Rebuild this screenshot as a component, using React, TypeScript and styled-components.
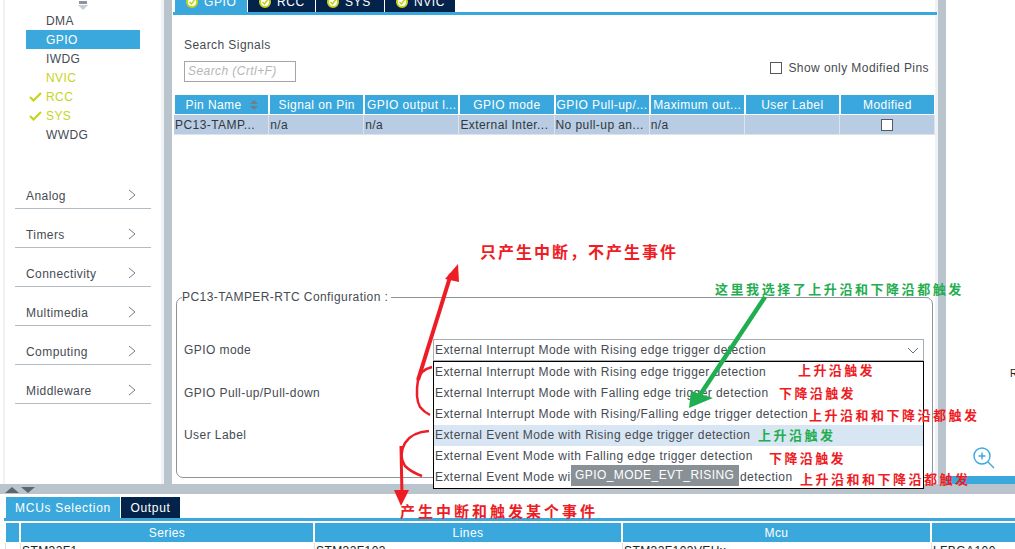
import styled, { createGlobalStyle } from "styled-components";

const Blue = "#3aa8dc";
const Navy = "#03234b";
const Steel = "#b9c4cc";
const Pale = "#f0f3f5";
const Ink = "#464b52";
const Lime = "#c6d41c";
const Red = "#ee1c25";
const Green = "#1fae50";

const GlobalStyle = createGlobalStyle`
    html, body {
        margin: 0;
        padding: 0;
        background: #fff;
    }
    * {
        box-sizing: border-box;
    }
`;

const peripherals = [
    { name: "DMA" },
    { name: "GPIO", selected: true },
    { name: "IWDG" },
    { name: "NVIC", active: true },
    { name: "RCC", active: true, checked: true },
    { name: "SYS", active: true, checked: true },
    { name: "WWDG" },
];

const categories = ["Analog", "Timers", "Connectivity", "Multimedia", "Computing", "Middleware"];

const tabs = [
    { name: "GPIO", width: 72, selected: true },
    { name: "RCC", width: 67 },
    { name: "SYS", width: 68 },
    { name: "NVIC", width: 70 },
];

const columns = [
    "Pin Name",
    "Signal on Pin",
    "GPIO output l...",
    "GPIO mode",
    "GPIO Pull-up/...",
    "Maximum out...",
    "User Label",
    "Modified",
];

const cells = ["PC13-TAMP...", "n/a", "n/a", "External Inter...", "No pull-up an...", "n/a", ""];

const options = [
    "External Interrupt Mode with Rising edge trigger detection",
    "External Interrupt Mode with Falling edge trigger detection",
    "External Interrupt Mode with Rising/Falling edge trigger detection",
    "External Event Mode with Rising edge trigger detection",
    "External Event Mode with Falling edge trigger detection",
    "External Event Mode with Rising/Falling edge trigger detection",
];

const notes = [
    { text: "只产生中断，不产生事件", x: 480, y: 243, size: 16, gap: 2, color: Red },
    { text: "这里我选择了上升沿和下降沿都触发", x: 715, y: 280, size: 13, gap: 2.55, color: Green },
    { text: "上升沿触发", x: 798, y: 361, size: 13, gap: 2.4, color: Red },
    { text: "下降沿触发", x: 779, y: 384, size: 13, gap: 2.4, color: Red },
    { text: "上升沿和和下降沿都触发", x: 809, y: 406, size: 13, gap: 2.5, color: Red },
    { text: "上升沿触发", x: 758, y: 426, size: 13, gap: 2.5, color: Green },
    { text: "下降沿触发", x: 769, y: 449, size: 13, gap: 2.4, color: Red },
    { text: "上升沿和和下降沿都触发", x: 800, y: 470, size: 13, gap: 2.5, color: Red },
    { text: "产生中断和触发某个事件", x: 400, y: 502, size: 15, gap: 3, color: Red },
];

function TabBadge() {
    return (
        <svg width="12" height="12" viewBox="0 0 12 12">
            <circle cx="6" cy="6" r="5" fill="#fff" stroke={Lime} strokeWidth="2" />
            <path d="M3.5 6 L5.5 8 L8.5 4" fill="none" stroke={Lime} strokeWidth="1.6" />
        </svg>
    );
}

function Check() {
    return (
        <svg width="13" height="10" viewBox="0 0 13 10">
            <path d="M1 5 L4.5 8.5 L12 1" fill="none" stroke={Lime} strokeWidth="2.2" />
        </svg>
    );
}

function Chevron() {
    return (
        <svg width="8" height="12" viewBox="0 0 8 12">
            <path d="M1 1 L7 6 L1 11" fill="none" stroke="#777d83" strokeWidth="1" />
        </svg>
    );
}

function Scribbles() {
    return (
        <svg width="1015" height="549" viewBox="0 0 1015 549">
            <path d="M418 380 L451 274" fill="none" stroke={Red} strokeWidth="4" />
            <path d="M458 264 L445 279 L459 282 Z" fill={Red} />
            <path d="M432 367 Q420 370 418 380 Q415 398 420 407 Q424 412 430 415" fill="none" stroke={Red} strokeWidth="2.5" />
            <path d="M765 297 L698 398" fill="none" stroke={Green} strokeWidth="4.5" />
            <path d="M689 408 L691 391 L713 398 Z" fill={Green} />
            <path d="M429 431 Q412 432 405 443 Q398 455 405 466 Q411 472 422 476" fill="none" stroke={Red} strokeWidth="2.5" />
            <path d="M401 446 L402 496" fill="none" stroke={Red} strokeWidth="3" />
            <path d="M401 506 L394 490 L409 490 Z" fill={Red} />
        </svg>
    );
}

export default function App() {
    return (
        <Page>
            <GlobalStyle />
            <TopArea>
                <Sidebar>
                    <ScrollHint>
                        <svg width="10" height="9" viewBox="0 0 10 9">
                            <rect x="1" y="0" width="8" height="3" fill="#8d9399" />
                            <path d="M0 4 H10 L5 9 Z" fill="#c6cbcf" />
                        </svg>
                    </ScrollHint>
                    {peripherals.map(item => (
                        <PeripheralRow key={item.name} $selected={item.selected} $active={item.active}>
                            <CheckSlot>{item.checked && <Check />}</CheckSlot>
                            {item.name}
                        </PeripheralRow>
                    ))}
                    <Categories>
                        {categories.map(name => (
                            <CategoryRow key={name}>
                                {name}
                                <Chevron />
                            </CategoryRow>
                        ))}
                    </Categories>
                </Sidebar>
                <VSplitter />
                <MainPanel>
                    <TabRow>
                        {tabs.map(tab => (
                            <Tab key={tab.name} $width={tab.width} $selected={tab.selected}>
                                <TabBadge />
                                {tab.name}
                            </Tab>
                        ))}
                    </TabRow>
                    <TabLine />
                    <SearchBar>
                        <SearchBlock>
                            <PlainLabel>Search Signals</PlainLabel>
                            <SearchInput>Search (Crtl+F)</SearchInput>
                        </SearchBlock>
                        <ModifiedToggle>
                            <CheckBox />
                            Show only Modified Pins
                        </ModifiedToggle>
                    </SearchBar>
                    <HeaderGrid>
                        {columns.map((name, i) => (
                            <HeaderCell key={name}>
                                {name}
                                {i === 0 && <SortMark />}
                            </HeaderCell>
                        ))}
                    </HeaderGrid>
                    <DataGrid>
                        {cells.map((value, i) => (
                            <DataCell key={i}>{value}</DataCell>
                        ))}
                        <DataCell $center>
                            <CheckBox />
                        </DataCell>
                    </DataGrid>
                    <ConfigBox>
                        <ConfigLegend>PC13-TAMPER-RTC Configuration :</ConfigLegend>
                        <ConfigGrid>
                            <PlainLabel>GPIO mode</PlainLabel>
                            <SelectBox>
                                {options[0]}
                                <svg width="12" height="7" viewBox="0 0 12 7">
                                    <path d="M1 1 L6 6 L11 1" fill="none" stroke="#6b7278" strokeWidth="1" />
                                </svg>
                            </SelectBox>
                            <PlainLabel>GPIO Pull-up/Pull-down</PlainLabel>
                            <span />
                            <PlainLabel>User Label</PlainLabel>
                            <span />
                        </ConfigGrid>
                    </ConfigBox>
                </MainPanel>
                <VSplitter />
                <SidePane>
                    <ClippedLetter>R</ClippedLetter>
                    <ZoomIcon>
                        <svg width="24" height="24" viewBox="0 0 24 24">
                            <circle cx="10" cy="10" r="8" fill="none" stroke={Blue} strokeWidth="1.4" />
                            <path d="M16 16 L22 22 M10 6.5 V13.5 M6.5 10 H13.5" fill="none" stroke={Blue} strokeWidth="1.4" />
                        </svg>
                    </ZoomIcon>
                    <SideBar />
                </SidePane>
            </TopArea>
            <HSplitter>
                <Triangle />
                <Triangle $down />
            </HSplitter>
            <BottomTabs>
                <BottomTab $selected $width={114}>MCUs Selection</BottomTab>
                <BottomTab $width={59}>Output</BottomTab>
            </BottomTabs>
            <BottomLine />
            <McuHeader>
                <McuHead />
                <McuHead>Series</McuHead>
                <McuHead>Lines</McuHead>
                <McuHead>Mcu</McuHead>
                <McuHead />
            </McuHeader>
            <McuRow>
                <McuCell />
                <McuCell>STM32F1</McuCell>
                <McuCell>STM32F103</McuCell>
                <McuCell>STM32F103VEHx</McuCell>
                <McuCell>LFBGA100</McuCell>
            </McuRow>

            <OptionMenu>
                {options.map((text, i) => (
                    <OptionRow key={text} $hover={i === 3}>
                        {text}
                    </OptionRow>
                ))}
                <Tooltip>GPIO_MODE_EVT_RISING</Tooltip>
            </OptionMenu>
            <ScribbleLayer>
                <Scribbles />
            </ScribbleLayer>
            {notes.map((note, i) => (
                <Note key={i} $x={note.x} $y={note.y} $size={note.size} $gap={note.gap} $color={note.color}>
                    {note.text}
                </Note>
            ))}
        </Page>
    );
}

const Page = styled.div`
    position: relative;
    display: flex;
    flex-direction: column;
    width: 1015px;
    height: 549px;
    overflow: hidden;
    background: #fff;
    color: ${Ink};
    font-family: "Liberation Sans", Arial, sans-serif;
    font-size: 12px;
    letter-spacing: 0.43px;
`;

const TopArea = styled.div`
    display: flex;
    flex: none;
    height: 484px;
`;

const Sidebar = styled.div`
    position: relative;
    width: 161px;
    margin-left: 3px;
    padding-top: 11px;
    border-left: 2px solid ${Pale};
    border-right: 3px solid ${Pale};
`;

const ScrollHint = styled.div`
    position: absolute;
    top: -1px;
    left: 73px;
`;

const PeripheralRow = styled.div<{ $selected?: boolean; $active?: boolean }>`
    display: flex;
    align-items: center;
    width: 114px;
    height: 19px;
    margin-left: 21px;
    background: ${p => (p.$selected ? Blue : "transparent")};
    color: ${p => (p.$selected ? "#fff" : p.$active ? Lime : Ink)};
`;

const CheckSlot = styled.span`
    display: flex;
    align-items: center;
    width: 20px;
    padding-left: 3px;
`;

const Categories = styled.div`
    margin: 26px 10px 0;
`;

const CategoryRow = styled.div`
    display: flex;
    align-items: flex-end;
    justify-content: space-between;
    height: 39px;
    padding: 0 15px 5px 11px;
    border-bottom: 1px solid #b4bcc3;

    svg {
        margin-bottom: 2px;
    }
`;

const VSplitter = styled.div`
    width: 8px;
    background: ${Steel};
`;

const MainPanel = styled.div`
    display: flex;
    flex-direction: column;
    width: 766px;
    border-right: 3px solid ${Pale};
`;

const TabRow = styled.div`
    display: flex;
    align-items: flex-end;
    height: 12px;
    padding-left: 3px;
    overflow: hidden;
`;

const Tab = styled.div<{ $width: number; $selected?: boolean }>`
    display: flex;
    flex: none;
    align-items: center;
    gap: 6px;
    width: ${p => p.$width}px;
    height: 21px;
    margin-right: 1px;
    padding-left: 11px;
    background: ${p => (p.$selected ? Blue : Navy)};
    color: #fff;
    letter-spacing: 0.6px;
`;

const TabLine = styled.div`
    height: 3px;
    margin-left: 1px;
    margin-right: -2px;
    background: ${Blue};
`;

const SearchBar = styled.div`
    display: flex;
    justify-content: space-between;
    align-items: flex-end;
    height: 80px;
    padding: 23px 6px 13px 12px;
`;

const SearchBlock = styled.div`
    display: flex;
    flex-direction: column;
    gap: 8px;
`;

const PlainLabel = styled.div`
    line-height: 16px;
`;

const SearchInput = styled.div`
    width: 112px;
    height: 21px;
    padding-left: 3px;
    border: 1px solid #a3a6a9;
    color: #b4b6b8;
    font-style: italic;
    line-height: 19px;
`;

const ModifiedToggle = styled.div`
    display: flex;
    align-items: center;
    gap: 6px;
    margin-bottom: 7px;
`;

const CheckBox = styled.span`
    display: block;
    width: 12px;
    height: 12px;
    border: 1px solid #54595e;
    background: #fff;
`;

const HeaderGrid = styled.div`
    display: grid;
    grid-template-columns: repeat(8, 93.125px);
    gap: 2px;
    height: 19px;
    margin-left: 3px;
`;

const HeaderCell = styled.div`
    position: relative;
    display: flex;
    align-items: center;
    justify-content: center;
    gap: 8px;
    overflow: hidden;
    background: ${Blue};
    color: #fff;
    white-space: nowrap;
`;

const SortMark = styled.span`
    display: flex;
    flex-direction: column;
    gap: 2px;

    &::before,
    &::after {
        content: "";
        width: 0;
        height: 0;
        border-left: 4px solid transparent;
        border-right: 4px solid transparent;
    }
    &::before {
        border-bottom: 4px solid #6f7f8b;
    }
    &::after {
        border-top: 4px solid #6f7f8b;
    }
`;

const DataGrid = styled.div`
    display: grid;
    grid-template-columns: repeat(8, 95.125px);
    height: 20px;
    margin: 1px 0 0 2px;
    border-bottom: 1px solid #dfe3e8;
    background: #b8cde3;
`;

const DataCell = styled.div<{ $center?: boolean }>`
    display: flex;
    align-items: center;
    justify-content: ${p => (p.$center ? "center" : "flex-start")};
    padding-left: 1px;
    border-right: 1px solid #dbe4ee;
    color: #33373c;
    white-space: nowrap;
    overflow: hidden;
`;

const ConfigBox = styled.fieldset`
    display: block;
    height: 188px;
    margin: auto 2px 6px 4px;
    padding: 0 8px 0 7px;
    border: 1px solid #8d9398;
    border-radius: 7px;
`;

const ConfigLegend = styled.legend`
    margin-left: -2px;
    padding: 0 3px 0 0;
    line-height: 15px;
`;

const ConfigGrid = styled.div`
    display: grid;
    grid-template-columns: 249px 1fr;
    grid-auto-rows: 22px;
    row-gap: 20.5px;
    align-items: center;
    margin-top: 34px;
`;

const SelectBox = styled.div`
    display: flex;
    align-items: center;
    justify-content: space-between;
    height: 22px;
    padding: 0 4px 0 1px;
    border: 1px solid #a7aeb4;
`;

const SidePane = styled.div`
    position: relative;
    display: flex;
    flex: 1;
    flex-direction: column;
    justify-content: flex-end;
`;

const SideBar = styled.div`
    height: 8px;
    background: ${Blue};
`;

const ClippedLetter = styled.span`
    position: absolute;
    top: 368px;
    left: 64px;
    color: #222;
    font-size: 10px;
`;

const ZoomIcon = styled.div`
    position: absolute;
    top: 446px;
    left: 26px;
`;

const HSplitter = styled.div`
    display: flex;
    flex: none;
    align-items: flex-end;
    gap: 2px;
    height: 10px;
    padding: 0 0 1px 5px;
    background: ${Steel};
`;

const Triangle = styled.span<{ $down?: boolean }>`
    width: 0;
    height: 0;
    border-left: 7px solid transparent;
    border-right: 7px solid transparent;
    ${p => (p.$down ? "border-top: 6px solid #5d666d;" : "border-bottom: 6px solid #5d666d;")}
`;

const BottomTabs = styled.div`
    display: flex;
    flex: none;
    gap: 1px;
    height: 24px;
    padding: 3px 0 0 6px;
`;

const BottomTab = styled.div<{ $selected?: boolean; $width: number }>`
    display: flex;
    align-items: center;
    justify-content: center;
    width: ${p => p.$width}px;
    height: 21px;
    background: ${p => (p.$selected ? Blue : Navy)};
    color: #fff;
    letter-spacing: 0.7px;
`;

const BottomLine = styled.div`
    flex: none;
    height: 3px;
    margin-left: 4px;
    background: ${Blue};
`;

const McuHeader = styled.div`
    display: grid;
    flex: none;
    grid-template-columns: 13px 292px 306px 307px 1fr;
    gap: 2px;
    height: 19px;
    margin: 2px 0 0 6px;
`;

const McuHead = styled.div`
    display: flex;
    align-items: center;
    justify-content: center;
    background: ${Blue};
    color: #fff;
`;

const McuRow = styled.div`
    display: grid;
    flex: none;
    grid-template-columns: 15px 294px 308px 309px 1fr;
    height: 20px;
    margin: 1px 0 0 5px;
`;

const McuCell = styled.div`
    padding: 1px 0 0 1px;
    border-left: 1px solid #dcdfe2;
    color: #222;
    line-height: 14px;
    white-space: nowrap;
`;

const OptionMenu = styled.div`
    position: absolute;
    top: 361px;
    left: 433px;
    width: 491px;
    height: 128px;
    border: 1px solid #000;
    background: #fff;
`;

const OptionRow = styled.div<{ $hover?: boolean }>`
    height: 21px;
    padding-left: 1px;
    background: ${p => (p.$hover ? "#d8e6f3" : "transparent")};
    line-height: 21px;
    white-space: nowrap;
`;

const Tooltip = styled.div`
    position: absolute;
    top: 103px;
    left: 137px;
    width: 168px;
    height: 21px;
    padding-left: 4px;
    background: #8a9196;
    color: #fff;
    line-height: 20px;
    white-space: nowrap;
`;

const ScribbleLayer = styled.div`
    position: absolute;
    inset: 0;
    pointer-events: none;
`;

const Note = styled.div<{ $x: number; $y: number; $size: number; $gap: number; $color: string }>`
    position: absolute;
    top: ${p => p.$y}px;
    left: ${p => p.$x}px;
    color: ${p => p.$color};
    font-family: "Noto Sans CJK SC", sans-serif;
    font-size: ${p => p.$size}px;
    font-weight: 700;
    letter-spacing: ${p => p.$gap}px;
    line-height: 17px;
    white-space: nowrap;
`;
